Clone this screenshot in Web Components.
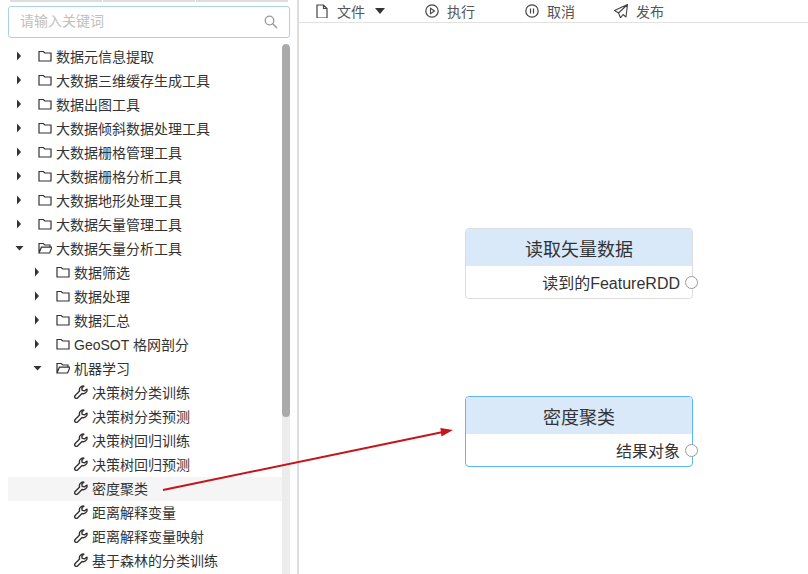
<!DOCTYPE html>
<html lang="zh">
<head>
<meta charset="utf-8">
<title>工作流</title>
<style>
html, body { margin: 0; height: 100%; overflow: hidden; background: #fff; }
body { font-family: "Liberation Sans", "Noto Sans CJK SC", sans-serif; color: #333; }
</style>
</head>
<body>
<app-shell>
    <side-panel slot="side">
        <search-box placeholder="请输入关键词"></search-box>
        <tree-row caret="closed" icon="folder">数据元信息提取</tree-row>
        <tree-row caret="closed" icon="folder">大数据三维缓存生成工具</tree-row>
        <tree-row caret="closed" icon="folder">数据出图工具</tree-row>
        <tree-row caret="closed" icon="folder">大数据倾斜数据处理工具</tree-row>
        <tree-row caret="closed" icon="folder">大数据栅格管理工具</tree-row>
        <tree-row caret="closed" icon="folder">大数据栅格分析工具</tree-row>
        <tree-row caret="closed" icon="folder">大数据地形处理工具</tree-row>
        <tree-row caret="closed" icon="folder">大数据矢量管理工具</tree-row>
        <tree-row caret="open" icon="open">大数据矢量分析工具</tree-row>
        <tree-row depth="1" caret="closed" icon="folder">数据筛选</tree-row>
        <tree-row depth="1" caret="closed" icon="folder">数据处理</tree-row>
        <tree-row depth="1" caret="closed" icon="folder">数据汇总</tree-row>
        <tree-row depth="1" caret="closed" icon="folder">GeoSOT 格网剖分</tree-row>
        <tree-row depth="1" caret="open" icon="open">机器学习</tree-row>
        <tree-row depth="2" icon="tool">决策树分类训练</tree-row>
        <tree-row depth="2" icon="tool">决策树分类预测</tree-row>
        <tree-row depth="2" icon="tool">决策树回归训练</tree-row>
        <tree-row depth="2" icon="tool">决策树回归预测</tree-row>
        <tree-row depth="2" icon="tool" active>密度聚类</tree-row>
        <tree-row depth="2" icon="tool">距离解释变量</tree-row>
        <tree-row depth="2" icon="tool">距离解释变量映射</tree-row>
        <tree-row depth="2" icon="tool">基于森林的分类训练</tree-row>
    </side-panel>
    <tool-bar slot="bar">
        <tool-button icon="file" menu style="width:110px">文件</tool-button>
        <tool-button icon="play" style="width:100px">执行</tool-button>
        <tool-button icon="pause" style="width:89px">取消</tool-button>
        <tool-button icon="send">发布</tool-button>
    </tool-bar>
    <flow-canvas slot="canvas">
        <flow-node title="读取矢量数据" style="left:166px;top:205px">读到的FeatureRDD</flow-node>
        <flow-node title="密度聚类" selected style="left:166px;top:373px">结果对象</flow-node>
    </flow-canvas>
    <flow-arrow slot="overlay"></flow-arrow>
</app-shell>

<script>
const ICONS = {
    folder: '<path d="M1 2.500h4.200L6.800 4H13v8H1z" fill="none" stroke="#333" stroke-width="1.200"/>',
    open: '<path d="M1 12V2.500h4.200L6.800 4H12v2.200M1 12l2.400-5.800H14L11.600 12z" fill="none" stroke="#333" stroke-width="1.200"/>',
    tool: '<path d="M13 4.200a3.800 3.800 0 0 1-5 4.300l-4.400 4.400a1.600 1.600 0 0 1-2.400-2.400L5.600 6.100a3.800 3.800 0 0 1 4.300-5L7.800 3.200l.4 2.200 2.200.4z" fill="none" stroke="#333" stroke-width="1.400" stroke-linejoin="round"/>',
    file: '<path d="M2 1h6.500L12 4.500V14H2zM8.500 1v3.500H12" fill="none" stroke="#444" stroke-width="1.200"/>',
    play: '<circle cx="7" cy="7" r="6.200" fill="none" stroke="#444" stroke-width="1.200"/><path d="M5.500 4.300 9.500 7l-4 2.700z" fill="none" stroke="#444" stroke-width="1.100"/>',
    pause: '<circle cx="7" cy="7" r="6.200" fill="none" stroke="#444" stroke-width="1.200"/><path d="M5.500 4.500v5M8.500 4.500v5" stroke="#444" stroke-width="1.200"/>',
    send: '<path d="M13.500.5.500 6.500l4 2.500 2 4.800L9 10.500l3 2.500zM13.500.5 4.500 9" fill="none" stroke="#444" stroke-width="1.100" stroke-linejoin="round"/>'
};

class AppShell extends HTMLElement {
    constructor() {
        super();
        this.attachShadow({ mode: 'open' }).innerHTML = `
            <style>
                :host { display: grid; grid-template-columns: 297px 2px 1fr; width: 808px; height: 574px; position: relative; overflow: hidden; }
                .rule { background: #ddd; }
                .main { display: flex; flex-direction: column; min-width: 0; }
            </style>
            <slot name="side"></slot>
            <div class="rule"></div>
            <div class="main">
                <slot name="bar"></slot>
                <slot name="canvas"></slot>
            </div>
            <slot name="overlay"></slot>`;
    }
}

class SidePanel extends HTMLElement {
    constructor() {
        super();
        this.attachShadow({ mode: 'open' }).innerHTML = `
            <style>
                :host { display: block; height: 574px; overflow: hidden; }
                .tabs { display: flex; gap: 1px; height: 2px; padding: 0 9px 0 10px; }
                .tabs i { flex: 1; background: #ddd; }
                .search { padding: 4px 7px 0 8px; }
                .list { display: grid; grid-template-columns: 274px 8px; margin: 6px 0 0 8px; width: 282px; }
                .rows { margin-top: 1px; }
                .track { background: #ececec; border-radius: 4px 4px 0 0; height: 530px; overflow: hidden; }
                .thumb { background: #aaa; height: 373px; border-radius: 4px; }
            </style>
            <div class="tabs"><i></i><i></i><i></i></div>
            <div class="search"><slot name="search"></slot></div>
            <div class="list">
                <div class="rows"><slot></slot></div>
                <div class="track"><div class="thumb"></div></div>
            </div>`;
    }
    connectedCallback() {
        this.querySelector('search-box')?.setAttribute('slot', 'search');
    }
}

class SearchBox extends HTMLElement {
    constructor() {
        super();
        this.attachShadow({ mode: 'open' });
    }
    connectedCallback() {
        const text = this.getAttribute('placeholder') || '';
        this.shadowRoot.innerHTML = `
            <style>
                :host { display: block; }
                .box { display: flex; align-items: center; height: 30px; border: 1px solid #a9d0f0; border-radius: 3px; padding: 0 11px; background: #fff; }
                input { flex: 1; min-width: 0; border: 0; outline: 0; padding: 0; margin-top: -2px; font: 14px "Liberation Sans", "Noto Sans CJK SC", sans-serif; background: none; }
                input::placeholder { color: #c0c0c0; opacity: 1; }
                svg { width: 14px; height: 14px; }
            </style>
            <div class="box">
                <input type="text" placeholder="${text}">
                <svg viewBox="0 0 14 14"><circle cx="5.500" cy="5.500" r="4.300" fill="none" stroke="#999" stroke-width="1.300"/><path d="m8.700 8.700 4.300 4.300" stroke="#999" stroke-width="1.500"/></svg>
            </div>`;
    }
}

class TreeRow extends HTMLElement {
    constructor() {
        super();
        this.attachShadow({ mode: 'open' });
    }
    connectedCallback() {
        const depth = Number(this.getAttribute('depth') || 0);
        const caret = this.getAttribute('caret');
        const icon = this.getAttribute('icon') || 'folder';
        let arrow = '';
        if (caret === 'closed') arrow = '<path d="M2 0.500 6 5 2 9.500z" fill="#333"/>';
        if (caret === 'open') arrow = '<path d="M0.500 3h8L4.500 7.500z" fill="#333"/>';
        this.shadowRoot.innerHTML = `
            <style>
                :host { display: flex; align-items: center; height: 24px; padding-left: ${depth * 18}px; font-size: 14px; color: #333; white-space: nowrap; }
                :host([active]) { background: #f5f5f5; }
                .caret { width: 22px; height: 24px; display: flex; align-items: center; justify-content: center; flex: none; }
                .caret svg { width: 9px; height: 10px; margin-top: -3px; }
                .icon { width: 18px; padding-left: 8px; height: 24px; display: flex; align-items: center; flex: none; }
                .icon svg { width: 14px; height: 14px; margin-top: -2px; }
                .label { margin-top: -2px; }
            </style>
            <span class="caret"><svg viewBox="0 0 9 10">${arrow}</svg></span>
            <span class="icon"><svg viewBox="0 0 14 14">${ICONS[icon]}</svg></span>
            <span class="label"><slot></slot></span>`;
    }
}

class ToolBar extends HTMLElement {
    constructor() {
        super();
        this.attachShadow({ mode: 'open' }).innerHTML = `
            <style>
                :host { display: flex; align-items: center; height: 22px; padding-left: 16px; border-bottom: 1px solid #e2e2e2; flex: none; margin-top: -4px; padding-top: 4px; }
            </style>
            <slot></slot>`;
    }
}

class ToolButton extends HTMLElement {
    constructor() {
        super();
        this.attachShadow({ mode: 'open' });
    }
    connectedCallback() {
        const icon = this.getAttribute('icon');
        const menu = this.hasAttribute('menu') ? '<svg class="menu" viewBox="0 0 10 6"><path d="M0 0h10L5 6z" fill="#333"/></svg>' : '';
        this.shadowRoot.innerHTML = `
            <style>
                :host { display: flex; align-items: center; flex: none; font-size: 14px; color: #555; white-space: nowrap; }
                .icon { width: 14px; height: 14px; margin-right: 8px; flex: none; }
                .menu { width: 10px; height: 6px; margin-left: 10px; }
            </style>
            <svg class="icon" viewBox="0 0 14 14">${ICONS[icon]}</svg>
            <slot></slot>${menu}`;
    }
}

class FlowCanvas extends HTMLElement {
    constructor() {
        super();
        this.attachShadow({ mode: 'open' }).innerHTML = `
            <style>
                :host { display: block; position: relative; flex: 1; }
            </style>
            <slot></slot>`;
    }
}

class FlowNode extends HTMLElement {
    constructor() {
        super();
        this.attachShadow({ mode: 'open' });
    }
    connectedCallback() {
        const title = this.getAttribute('title') || '';
        this.removeAttribute('title');
        this.shadowRoot.innerHTML = `
            <style>
                :host { display: block; position: absolute; width: 228px; height: 71px; box-sizing: border-box; border: 1px solid #ddd; border-radius: 4px; background: #fff; color: #333; }
                :host([selected]) { border-color: #5cb6f7; }
                .head { height: 37px; background: #d9e9fa; border-radius: 3px 3px 0 0; display: flex; align-items: center; justify-content: center; font-size: 18px; }
                .port { position: relative; height: 32px; display: flex; align-items: center; justify-content: flex-end; padding-right: 12px; font-size: 16px; }
                .dot { position: absolute; right: -6px; top: 10px; width: 13px; height: 13px; box-sizing: border-box; border: 1.500px solid #999; border-radius: 50%; background: #fff; }
            </style>
            <div class="head">${title}</div>
            <div class="port"><slot></slot><span class="dot"></span></div>`;
    }
}

class FlowArrow extends HTMLElement {
    constructor() {
        super();
        this.attachShadow({ mode: 'open' }).innerHTML = `
            <style>
                :host { position: absolute; left: 0; top: 0; width: 808px; height: 574px; pointer-events: none; }
                svg { display: block; }
            </style>
            <svg width="808" height="574" viewBox="0 0 808 574">
                <path d="M163 490 443 432" stroke="#c5141a" stroke-width="2" fill="none"/>
                <path d="M453 430 441.500 436.500 440.400 428z" fill="#c5141a"/>
            </svg>`;
    }
}

customElements.define('app-shell', AppShell);
customElements.define('side-panel', SidePanel);
customElements.define('search-box', SearchBox);
customElements.define('tree-row', TreeRow);
customElements.define('tool-bar', ToolBar);
customElements.define('tool-button', ToolButton);
customElements.define('flow-canvas', FlowCanvas);
customElements.define('flow-node', FlowNode);
customElements.define('flow-arrow', FlowArrow);
</script>
</body>
</html>
